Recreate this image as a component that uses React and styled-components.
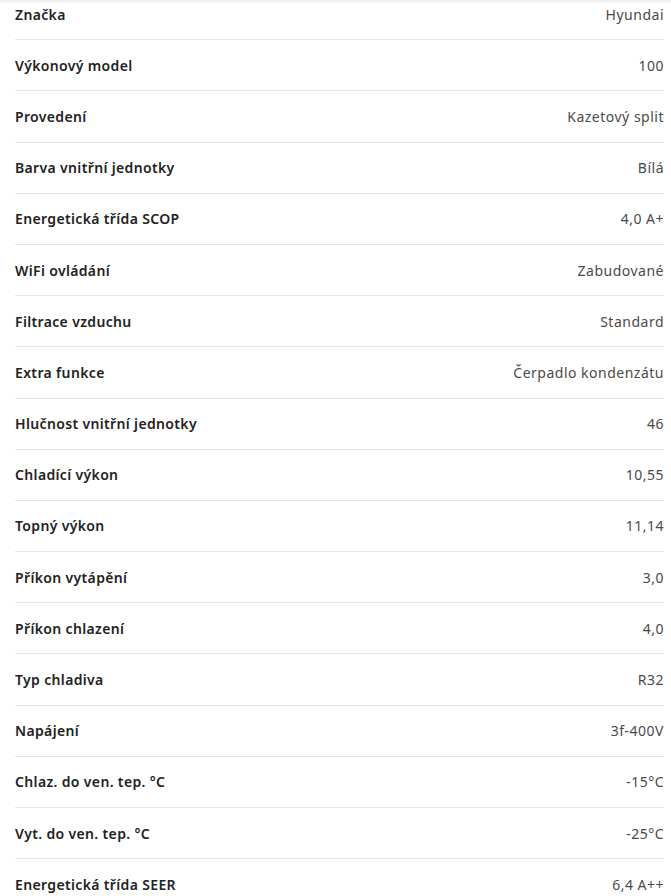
import React from 'react';
import styled, { createGlobalStyle } from 'styled-components';

const GlobalStyle = createGlobalStyle`
  html, body {
    margin: 0;
    padding: 0;
    background: #fff;
  }
  body {
    font-family: 'Noto Sans', 'Open Sans', sans-serif;
  }
`;

const TopShade = styled.div`
  position: fixed;
  top: 0;
  left: 0;
  right: 0;
  height: 4px;
  background: linear-gradient(to bottom, rgba(0, 0, 0, 0.07), rgba(0, 0, 0, 0));
  z-index: 2;
`;

const SpecList = styled.dl`
  margin: -11px 0 0;
  padding: 0 7px 0 15px;
`;

const Row = styled.div`
  display: flex;
  align-items: center;
  justify-content: space-between;
  height: 50.2px;
  border-bottom: ${({ $last }) => ($last ? 'none' : '1px solid #e6e6e6')};
`;

const Label = styled.dt`
  margin: 0;
  font-size: 14px;
  font-weight: 600;
  letter-spacing: 0.35px;
  color: #222;
`;

const Value = styled.dd`
  margin: 0;
  font-size: 14px;
  font-weight: 400;
  letter-spacing: 0.5px;
  color: #4a4a4a;
  text-align: right;
`;

const specs = [
  ['Značka', 'Hyundai'],
  ['Výkonový model', '100'],
  ['Provedení', 'Kazetový split'],
  ['Barva vnitřní jednotky', 'Bílá'],
  ['Energetická třída SCOP', '4,0 A+'],
  ['WiFi ovládání', 'Zabudované'],
  ['Filtrace vzduchu', 'Standard'],
  ['Extra funkce', 'Čerpadlo kondenzátu'],
  ['Hlučnost vnitřní jednotky', '46'],
  ['Chladící výkon', '10,55'],
  ['Topný výkon', '11,14'],
  ['Příkon vytápění', '3,0'],
  ['Příkon chlazení', '4,0'],
  ['Typ chladiva', 'R32'],
  ['Napájení', '3f-400V'],
  ['Chlaz. do ven. tep. °C', '-15°C'],
  ['Vyt. do ven. tep. °C', '-25°C'],
  ['Energetická třída SEER', '6,4 A++'],
];

export default function App() {
  return (
    <>
      <GlobalStyle />
      <TopShade />
      <SpecList>
        {specs.map(([label, value], i) => (
          <Row key={label} $last={i === specs.length - 1}>
            <Label>{label}</Label>
            <Value>{value}</Value>
          </Row>
        ))}
      </SpecList>
    </>
  );
}
